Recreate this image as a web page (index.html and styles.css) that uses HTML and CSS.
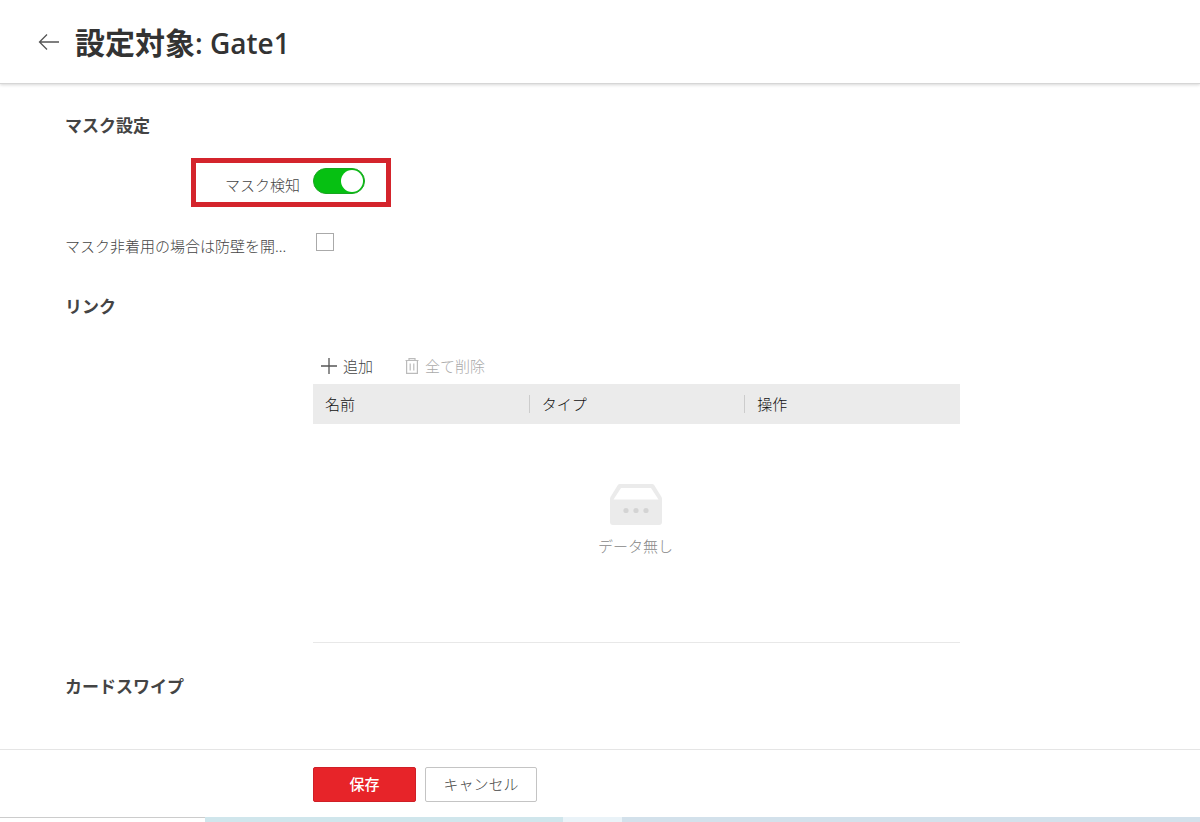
FILE: index.html
```html
<!DOCTYPE html>
<html lang="ja">
<head>
<meta charset="utf-8">
<title>設定対象: Gate1</title>
<link rel="stylesheet" href="styles.css">
</head>
<body>
<div class="app">
  <header class="page-header">
    <button class="back" type="button" aria-label="戻る">
      <svg width="22" height="18" viewBox="0 0 22 18"><path d="M21 9H1.5M9 1.5 1.5 9 9 16.500" fill="none" stroke="#555" stroke-width="1.3"/></svg>
    </button>
    <h1 class="page-title">設定対象<span class="target-name">: Gate1</span></h1>
  </header>

  <main class="content">
    <h2 class="section-title">マスク設定</h2>
    <div class="highlight">
      <label class="switch-label" for="mask-detect">マスク検知</label>
      <input class="switch" id="mask-detect" type="checkbox" role="switch" checked>
    </div>
    <div class="field-row">
      <label class="field-label" for="no-mask">マスク非着用の場合は防壁を開...</label>
      <input class="check" id="no-mask" type="checkbox">
    </div>

    <h2 class="section-title link-title">リンク</h2>
    <section class="link-panel">
      <div class="toolbar">
        <button class="tool" type="button">
          <svg width="16" height="16" viewBox="0 0 16 16"><path d="M8 0v16M0 8h16" fill="none" stroke="#555" stroke-width="1.3"/></svg>
          追加
        </button>
        <button class="tool" type="button" disabled>
          <svg width="14" height="16" viewBox="0 0 14 16"><path d="M.5 2.500h13M4 2.500V.6h6v1.900M1.600 2.500v12.900h10.800V2.500M5.200 5.500v7M8.800 5.500v7" fill="none" stroke="#bbb" stroke-width="1.200"/></svg>
          全て削除
        </button>
      </div>
      <table class="links">
        <thead>
          <tr><th><span class="cell">名前</span></th><th><span class="cell">タイプ</span></th><th><span class="cell">操作</span></th></tr>
        </thead>
        <tbody>
          <tr><td colspan="3">
            <div class="empty">
              <svg width="54" height="42" viewBox="0 0 54 42"><path fill="#ebebeb" fill-rule="evenodd" d="M11 0H43Q44.500 0 45.300 1.300L52.500 13Q53 14 53 15V38Q53 41 50 41H4Q1 41 1 38V15Q1 14 1.500 13L8.700 1.300Q9.500 0 11 0ZM12 4 4.500 15.500H49.500L42 4Z"/><g fill="#d4d4d4"><circle cx="17" cy="26.500" r="2.600"/><circle cx="27" cy="26.500" r="2.600"/><circle cx="37" cy="26.500" r="2.600"/></g></svg>
              <span>データ無し</span>
            </div>
          </td></tr>
        </tbody>
      </table>
    </section>

    <h2 class="section-title card-title">カードスワイプ</h2>
  </main>

  <footer class="actions">
    <button class="btn save" type="button">保存</button>
    <button class="btn cancel" type="button">キャンセル</button>
  </footer>
  <div class="taskbar"><span class="task-start"></span><span class="task-left"></span><span class="task-active"></span><span class="task-right"></span></div>
</div>
</body>
</html>
```

FILE: styles.css
```css
* { box-sizing: border-box; }

body {
  margin: 0;
  background: #fff;
  color: #444;
  font: 300 15px/24px "Noto Sans CJK JP", sans-serif;
}

button { font: inherit; cursor: pointer; }
svg { display: block; flex: none; }

.app { display: flex; flex-direction: column; min-height: 100vh; }

.page-header {
  display: flex;
  align-items: center;
  gap: 15px;
  height: 84px;
  padding: 0 38px;
  border-bottom: 1px solid #d6d6d6;
  box-shadow: 0 1px 3px rgba(0, 0, 0, .16);
}
.back { padding: 0; border: 0; background: none; }
.page-title {
  margin: 0;
  padding-top: 3px;
  color: #333;
  font: 700 30px/48px "Open Sans", "Noto Sans CJK JP", sans-serif;
}
.target-name { font-size: 28px; font-weight: 600; }

.content { flex: 1; padding: 29px 65px 48px; }
.section-title { margin: 0; font-size: 17px; line-height: 24px; font-weight: 700; }

.highlight {
  display: flex;
  align-items: flex-start;
  justify-content: flex-end;
  gap: 13px;
  width: 200px;
  height: 49px;
  margin: 21px 0 0 126px;
  padding: 5px 21px 0 0;
  border: 5px solid #d4242c;
}
.switch-label { padding-top: 5px; }
.switch {
  appearance: none;
  width: 52px;
  height: 26px;
  margin: 0;
  padding: 1px;
  border: 1px solid #18a520;
  border-radius: 13px;
  background: #06c012;
}
.switch::before {
  content: "";
  display: block;
  width: 22px;
  height: 22px;
  border-radius: 50%;
  background: #fff;
}
.switch:checked::before { margin-left: auto; }

.field-row { display: flex; align-items: flex-start; margin-top: 26px; }
.field-label { width: 251px; padding-top: 1px; }
.check {
  appearance: none;
  width: 18px;
  height: 18px;
  margin: 0;
  border: 1px solid #aaa;
  background: #fff;
}

.link-title { margin-top: 36px; }
.link-panel { max-width: 895px; padding-left: 248px; }
.toolbar { display: flex; gap: 32px; padding: 36px 8px 6px; }
.tool {
  display: flex;
  align-items: center;
  gap: 6px;
  padding: 0;
  border: 0;
  background: none;
  color: #444;
  line-height: 24px;
}
.tool:disabled { color: #aaa; }

.links { width: 100%; border-collapse: collapse; table-layout: fixed; border-bottom: 1px solid #e8e8e8; }
.links th { height: 40px; padding: 0; background: #ebebeb; color: #111; font-weight: 300; text-align: left; }
.cell { display: block; padding-left: 12px; line-height: 18px; }
th + th .cell { border-left: 1px solid #ccc; }
.links td { height: 218px; padding: 0; }
.empty {
  display: flex;
  flex-direction: column;
  align-items: center;
  gap: 8px;
  padding: 0 2px 23px 0;
  color: #888;
}
.card-title { margin-top: 31px; }

.actions { display: flex; gap: 9px; padding: 17px 0 15px 313px; border-top: 1px solid #e5e5e5; }
.btn { height: 35px; padding: 0 17px 2px; border-radius: 2px; line-height: 24px; }
.save { min-width: 103px; border: 1px solid #cf1f27; background: #e72429; color: #fff; font-weight: 500; }
.cancel { min-width: 112px; border: 1px solid #c4c4c4; background: #fff; color: #444; }

.taskbar { display: flex; height: 5px; }
.task-start { width: 205px; border-top: 1px solid #ccc; }
.task-left { width: 358px; background: #d0e6ec; }
.task-active { width: 59px; background: #eaf3f8; }
.task-right { flex: 1; background: #d3e1eb; }
```
